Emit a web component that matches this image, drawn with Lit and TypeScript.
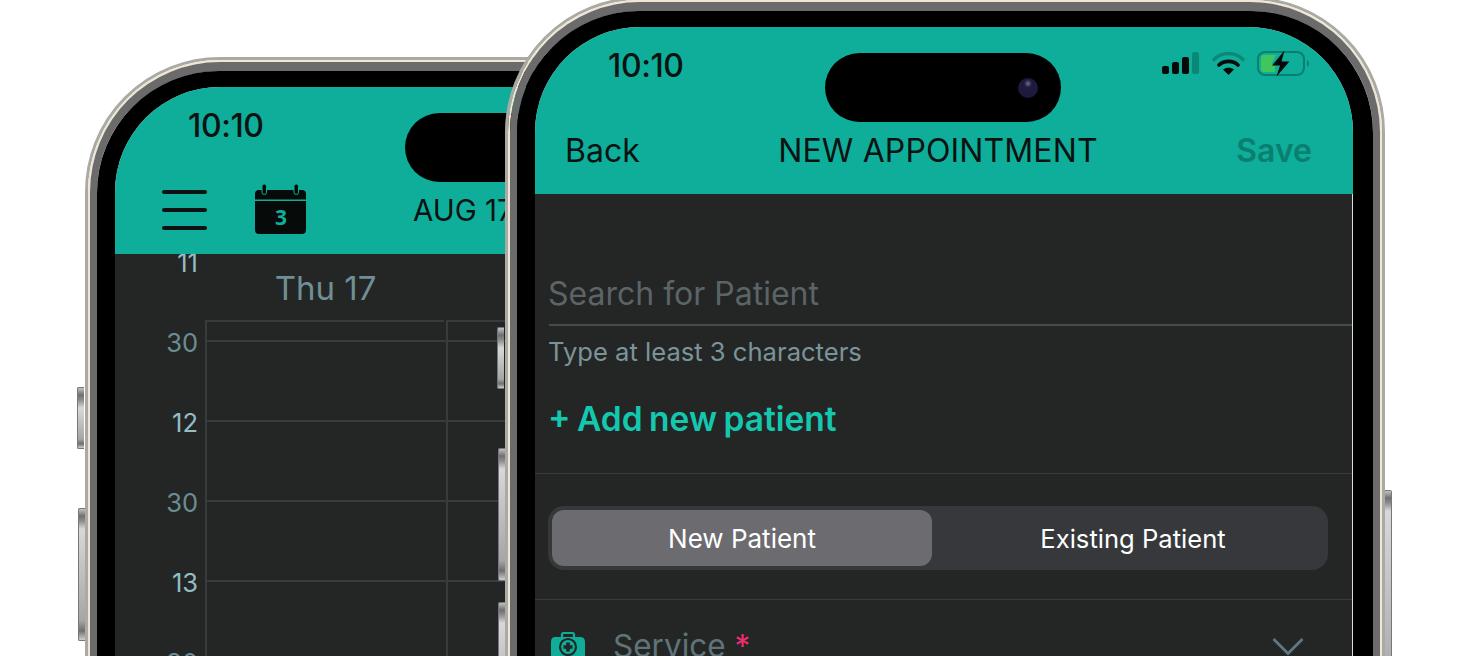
import { LitElement, html, css, svg } from "lit";
import { customElement } from "lit/decorators.js";

const SANS = css`Inter, "Liberation Sans", sans-serif`;

@customElement("phone-frame")
class PhoneFrame extends LitElement {
  static styles = css`
    :host { display: block; position: absolute; width: 880px; height: 1800px; }
    .edge { border: 3px solid #a9a9a5; border-radius: 135px; height: 100%; box-sizing: border-box; }
    .rim { border: 2px solid #efe6d3; border-radius: 132px; height: 100%; box-sizing: border-box; }
    .band { border: solid #6b6b6b; border-width: 9px 7px 7px; border-radius: 130px; height: 100%; box-sizing: border-box; }
    .bezel { border: solid #000; border-width: 16px 20px 18px 18px; border-radius: 122px; height: 100%; box-sizing: border-box; background: #000; }
    .screen { border-radius: 105px 105px 0 0; height: 100%; overflow: hidden; background: #dcdcdc; position: relative; }
    .key {
      position: absolute; width: 7px; box-sizing: border-box; border: 1px solid #77777a; border-right: 0; border-radius: 2px 0 0 2px;
      background: linear-gradient(180deg, #c2c2c2 0, #6f6f6f 7px, #8d8d8d 12px, #d8d8d8 20px, #a6a6a6 85%, #6f6f6f 93%, #cfcfcf 100%);
    }
    .k1 { left: -8px; top: 330px; height: 62px; }
    .k2 { left: -7px; top: 451px; height: 133px; }
    .k3 { left: -7px; top: 605px; height: 133px; }
    .k4 { right: -7px; top: 493px; height: 240px; border-left: 0; border-right: 1px solid #77777a; border-radius: 0 2px 2px 0; }
  `;
  render() {
    return html`
      <div class="key k1"></div><div class="key k2"></div><div class="key k3"></div><div class="key k4"></div>
      <div class="edge"><div class="rim"><div class="band"><div class="bezel">
        <div class="screen"><slot></slot></div>
      </div></div></div></div>
    `;
  }
}

const statusIcons = svg`
  <rect x="0" y="14" width="7" height="8" rx="2" fill="#060a09"/>
  <rect x="10" y="10" width="7" height="12" rx="2" fill="#060a09"/>
  <rect x="20" y="5" width="7" height="17" rx="2" fill="#060a09"/>
  <rect x="30" y="0" width="7" height="22" rx="2" fill="#0a8777"/>
  <path d="M52 7.500 C60 -0.500 73 -0.500 81 7.500" fill="none" stroke="#0a8777" stroke-width="3.600" stroke-linecap="round"/>
  <path d="M57 13 C62 8.200 71 8.200 76 13" fill="none" stroke="#060a09" stroke-width="3.600" stroke-linecap="round"/>
  <path d="M61 17.500 C64 15 69 15 72 17.500 L66.500 23 Z" fill="#060a09"/>
  <rect x="96" y="0" width="46" height="23" rx="7" fill="none" stroke="#0a7f70" stroke-width="2"/>
  <path d="M145 8 C147.500 9 147.500 14 145 15 Z" fill="#0a7f70"/>
  <path d="M102 3 H114 L109.500 12 H113 V20 H102 Q99 20 99 17 V6 Q99 3 102 3 Z" fill="#3fc65c"/>
  <path d="M122.500 -1.500 L110 13.500 H118 L114.500 24.500 L127.500 9.500 H119.500 Z" fill="#060a09"/>
`;

@customElement("app-root")
class AppRoot extends LitElement {
  static styles = css`
    :host { display: block; position: relative; width: 1468px; height: 656px; overflow: hidden; background: #fff; font-family: ${SANS}; }
    .back-phone { left: 85px; top: 57px; }
    .front-phone { left: 505px; top: -3px; }

    .head { position: relative; height: 167px; background: #0eae9a; display: flex; flex-direction: column; color: #0b1211; flex: none; }
    .status { height: 76px; padding: 21px 41px 0 73px; box-sizing: border-box; display: flex; justify-content: space-between; }
    .time { font-size: 32px; line-height: 36px; font-weight: 500; letter-spacing: -0.4px; }
    .status svg { margin-top: 4px; overflow: visible; }
    .island { position: absolute; left: 290px; top: 26px; width: 236px; height: 69px; border-radius: 35px; background: #000; display: flex; align-items: center; justify-content: flex-end; padding-right: 23px; box-sizing: border-box; }
    .lens { width: 20px; height: 20px; border-radius: 50%; background: radial-gradient(circle at 50% 28%, #6f6d8c 0, #1e1b40 22%, #1b1838 100%); }

    .nav { flex: 1; display: flex; align-items: center; justify-content: space-between; padding: 5px 41px 0 30px; font-size: 32px; line-height: 40px; }
    .title { letter-spacing: 0.13px; }
    .save { color: #0a7f70; font-weight: 600; }

    .nav-left { flex: 1; display: flex; align-items: center; padding: 0 0 0 47px; margin-top: 2px; }
    .burger { width: 45px; display: flex; flex-direction: column; gap: 14px; }
    .burger i { display: block; height: 4px; border-radius: 2px; background: #0b1211; }
    .cal { margin-left: 48px; display: block; }
    .cal text { font-family: "Open Sans", sans-serif; font-weight: 700; font-size: 21px; fill: #0eae9a; }
    .date { margin-left: 106px; font-size: 29.500px; white-space: nowrap; }

    .sched { height: 1000px; background: #242625; display: flex; overflow: hidden; }
    .hours { width: 83px; margin-top: -31px; flex: none; text-align: right; font-size: 25.500px; }
    .hours div { height: 80px; line-height: 80px; color: #6c8d94; }
    .hours .full { color: #93bdc4; }
    .day { width: 241px; margin-left: 7px; flex: none; }
    .day + .day { margin-left: 0; }
    .day-name { height: 64px; padding-top: 2px; display: flex; align-items: center; justify-content: center; font-size: 33px; color: #6f8f96; }
    .grid { border-left: 2px solid #383b3b; height: 900px; }
    .grid .top { height: 18px; border-top: 2px solid #383b3b; margin-right: 2px; }
    .grid .slot { height: 78px; border-top: 2px solid #383b3b; }

    .form { margin-right: 1px; height: 1000px; background: #242625; }
    .search { margin-left: 14px; padding-top: 78px; padding-bottom: 8px; border-bottom: 2px solid #484b4c; font-size: 32px; line-height: 44px; color: #5b6466; text-indent: -1px; }
    .hint { margin: 11px 0 0 13px; font-size: 25.600px; line-height: 30px; color: #7b9499; }
    .add { margin: 30px 0 0 13px; font-size: 33.500px; line-height: 44px; font-weight: 600; color: #13c8af; word-spacing: -2px; }
    .rule { height: 1px; background: #3a3c3c; }
    .rule.a { margin-top: 32px; }
    .seg-wrap { padding: 32px 24px 29px 13px; }
    .seg { display: grid; grid-template-columns: 380px 1fr; height: 64px; padding: 4px; box-sizing: border-box; border-radius: 16px; background: #37383c; }
    .seg div { display: flex; align-items: center; justify-content: center; color: #fff; font-size: 26px; font-weight: 400; border-radius: 12px; }
    .seg .on { background: #6c6c70; }
    .seg .off { padding-left: 10px; font-size: 25.600px; }
    .service { display: flex; align-items: flex-start; padding: 31px 48px 0 14px; }
    .service .label { margin: -3px 0 0 28px; font-size: 31.500px; line-height: 36px; color: #5f7479; }
    .service .star { color: #ee2f6b; }
    .service .chev { margin-left: auto; margin-top: 6px; }
  `;

  render() {
    return html`
      <phone-frame class="back-phone">
        <div class="head">
          <div class="status"><span class="time">10:10</span></div>
          <div class="island"></div>
          <div class="nav-left">
            <div class="burger"><i></i><i></i><i></i></div>
            <svg class="cal" width="52" height="52" viewBox="0 0 52 52">
              <path d="M4 6 H47 Q51 6 51 10 V46 Q51 50 47 50 H4 Q0 50 0 46 V10 Q0 6 4 6 Z" fill="#060a09"/>
              <rect x="0" y="15.500" width="51" height="1.500" fill="#0eae9a"/>
              <rect x="7" y="0" width="4.500" height="10.500" rx="2.200" fill="#060a09" stroke="#0eae9a" stroke-width="1"/>
              <rect x="39" y="0" width="4.500" height="10.500" rx="2.200" fill="#060a09" stroke="#0eae9a" stroke-width="1"/>
              <text x="26" y="41" text-anchor="middle">3</text>
            </svg>
            <span class="date">AUG 17</span>
          </div>
        </div>
        <div class="sched">
          <div class="hours">
            <div class="full">11</div><div>30</div><div class="full">12</div><div>30</div><div class="full">13</div><div>30</div>
          </div>
          ${[0, 1].map(() => html`
            <div class="day">
              <div class="day-name">Thu 17</div>
              <div class="grid"><div class="top"></div><div class="slot"></div><div class="slot"></div><div class="slot"></div><div class="slot"></div></div>
            </div>`)}
        </div>
      </phone-frame>

      <phone-frame class="front-phone">
        <div class="head">
          <div class="status">
            <span class="time">10:10</span>
            <svg width="150" height="24" viewBox="0 0 150 24">${statusIcons}</svg>
          </div>
          <div class="island"><div class="lens"></div></div>
          <div class="nav"><span>Back</span><span class="title">NEW APPOINTMENT</span><span class="save">Save</span></div>
        </div>
        <div class="form">
          <div class="search">Search for Patient</div>
          <div class="hint">Type at least 3 characters</div>
          <div class="add">+ Add new patient</div>
          <div class="rule a"></div>
          <div class="seg-wrap"><div class="seg"><div class="on">New Patient</div><div class="off">Existing Patient</div></div></div>
          <div class="rule"></div>
          <div class="service">
            <svg width="36" height="36" viewBox="0 0 36 36">
              <path d="M13 6 V3.500 Q13 2 14.500 2 H23.500 Q25 2 25 3.500 V6" fill="none" stroke="#0eae9a" stroke-width="2.200"/>
              <path d="M6 6 H31 Q36 6 36 11 V36 H2 V11 Q2 6 6 6 Z" fill="#0eae9a"/>
              <circle cx="19" cy="16" r="8" fill="none" stroke="#232625" stroke-width="2.200"/>
              <path d="M19 11.500 V20.500 M14.500 16 H23.500" stroke="#232625" stroke-width="3.600"/>
            </svg>
            <span class="label">Service<span class="star"> *</span></span>
            <svg class="chev" width="32" height="20" viewBox="0 0 32 20"><path d="M1.500 2 L16 16.500 L30.500 2" fill="none" stroke="#5d7a7e" stroke-width="2.800"/></svg>
          </div>
        </div>
      </phone-frame>
    `;
  }
}
